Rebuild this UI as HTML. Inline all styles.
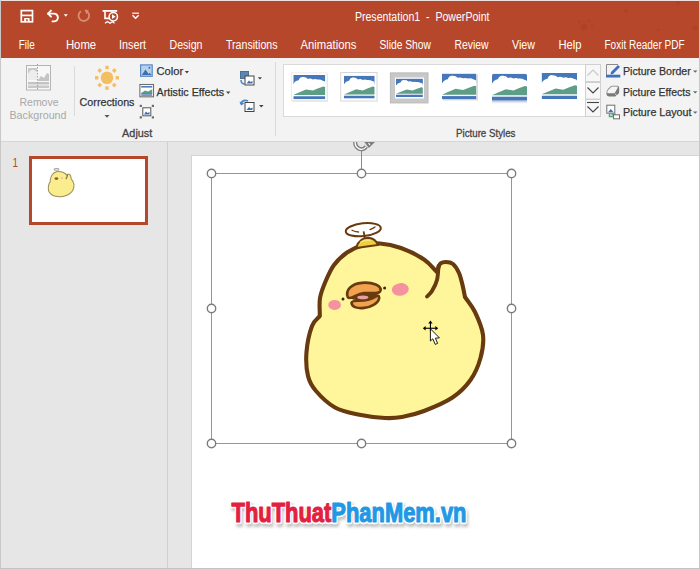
<!DOCTYPE html>
<html><head><meta charset="utf-8"><style>
*{margin:0;padding:0}
html,body{width:700px;height:569px;overflow:hidden;background:#E6E6E6}
svg{display:block;font-family:"Liberation Sans", sans-serif}
</style></head><body>
<svg width="700" height="569" viewBox="0 0 700 569"><defs><clipPath id="rclip"><path d="M492 100 V76.1 Q492 73.6 494.5 73.6 H524.5 Q527 73.6 527 76.1 V100 Z"/></clipPath><linearGradient id="refl" x1="0" y1="0" x2="0" y2="1"><stop offset="0" stop-color="#7C9CCC"/><stop offset="1" stop-color="#FFFFFF" stop-opacity="0"/></linearGradient><clipPath id="rotclip"><rect x="300" y="142" width="120" height="30"/></clipPath><filter id="blur" x="-10%" y="-30%" width="120%" height="160%"><feGaussianBlur stdDeviation="1.5"/></filter></defs>
<rect x="0" y="0" width="700" height="569" fill="#E6E6E6"/>
<rect x="1" y="1" width="698" height="57" fill="#B7472A"/>
<rect x="1" y="58" width="698" height="84" fill="#F3F3F3"/>
<rect x="1" y="141" width="698" height="1" fill="#D6D6D6"/>
<rect x="0" y="0" width="1" height="569" fill="#C8C8C8"/>
<rect x="699" y="0" width="1" height="569" fill="#D0D0D0"/>
<g fill="#9E3A22" opacity="0.35"><circle cx="626" cy="11" r="2"/><circle cx="584" cy="27" r="3.2"/><circle cx="579" cy="22" r="1.3"/><circle cx="589" cy="21" r="1.3"/><circle cx="592" cy="26" r="1.2"/><circle cx="658" cy="30" r="1.6"/><circle cx="678" cy="2.5" r="2.2"/><circle cx="695" cy="28" r="2.5"/><circle cx="515" cy="43" r="1.5"/></g>
<rect x="0" y="0" width="700" height="1" fill="#EFE2DE"/>
<text x="354.9" y="20.5" font-size="12.5" fill="#FFFFFF" font-weight="normal" textLength="134.6" lengthAdjust="spacingAndGlyphs" >Presentation1&#160;&#160;-&#160;&#160;PowerPoint</text>
<text x="18.8" y="49.0" font-size="12.5" fill="#FFFFFF" font-weight="normal" textLength="16.0" lengthAdjust="spacingAndGlyphs" >File</text>
<text x="65.9" y="49.0" font-size="12.5" fill="#FFFFFF" font-weight="normal" textLength="30.3" lengthAdjust="spacingAndGlyphs" >Home</text>
<text x="119.0" y="49.0" font-size="12.5" fill="#FFFFFF" font-weight="normal" textLength="27.0" lengthAdjust="spacingAndGlyphs" >Insert</text>
<text x="169.5" y="49.0" font-size="12.5" fill="#FFFFFF" font-weight="normal" textLength="33.0" lengthAdjust="spacingAndGlyphs" >Design</text>
<text x="226.0" y="49.0" font-size="12.5" fill="#FFFFFF" font-weight="normal" textLength="51.5" lengthAdjust="spacingAndGlyphs" >Transitions</text>
<text x="300.5" y="49.0" font-size="12.5" fill="#FFFFFF" font-weight="normal" textLength="56.0" lengthAdjust="spacingAndGlyphs" >Animations</text>
<text x="379.5" y="49.0" font-size="12.5" fill="#FFFFFF" font-weight="normal" textLength="51.5" lengthAdjust="spacingAndGlyphs" >Slide Show</text>
<text x="454.5" y="49.0" font-size="12.5" fill="#FFFFFF" font-weight="normal" textLength="34.0" lengthAdjust="spacingAndGlyphs" >Review</text>
<text x="512.0" y="49.0" font-size="12.5" fill="#FFFFFF" font-weight="normal" textLength="23.0" lengthAdjust="spacingAndGlyphs" >View</text>
<text x="558.5" y="49.0" font-size="12.5" fill="#FFFFFF" font-weight="normal" textLength="23.0" lengthAdjust="spacingAndGlyphs" >Help</text>
<text x="604.5" y="49.0" font-size="12.5" fill="#FFFFFF" font-weight="normal" textLength="80.0" lengthAdjust="spacingAndGlyphs" >Foxit Reader PDF</text>
<g fill="none" stroke="#FFFFFF" stroke-width="1.7"><rect x="21.3" y="10.6" width="11.2" height="11.2"/><path d="M21.3 15.4 H32.5"/></g><rect x="24.2" y="18" width="5.4" height="3.8" fill="#FFFFFF"/><rect x="26.2" y="19.2" width="1.5" height="2" fill="#B7472A"/>
<g fill="none" stroke="#FFFFFF" stroke-width="1.9" stroke-linecap="round" stroke-linejoin="round"><path d="M48 13.6 H54 A3.9 3.9 0 0 1 54 21.4 H52.5"/><path d="M51 10.6 L48 13.6 L51 16.6"/></g>
<path d="M63.8 14.2 H67.8 L65.8 16.7 Z" fill="#FFFFFF"/>
<g fill="none" stroke="#D98C76" stroke-width="1.8"><path d="M81 11.2 A5.3 5.3 0 1 0 87.2 11.6"/></g><path d="M84.5 9.6 L88.8 10.3 L86.4 14.2 Z" fill="#D98C76"/>
<rect x="102.6" y="10" width="14.6" height="1.8" fill="#FFFFFF"/><path d="M105 11.5 V18.4 H109" fill="none" stroke="#FFFFFF" stroke-width="1.6"/><circle cx="113.3" cy="16.7" r="4.2" fill="none" stroke="#FFFFFF" stroke-width="1.5"/><path d="M112 14.3 L115.6 16.7 L112 19.1 Z" fill="#FFFFFF"/><path d="M105 23.2 L107.5 21.5 L110 23.2 L112.5 21.8 L114.5 23.2" fill="none" stroke="#FFFFFF" stroke-width="1.3"/>
<path d="M132.2 13.2 H139" stroke="#FFFFFF" stroke-width="1.2"/><path d="M132.5 15.3 L135.6 18.3 L138.7 15.3" fill="none" stroke="#FFFFFF" stroke-width="1.5"/>
<g><rect x="26.5" y="65.5" width="24" height="24.5" fill="#F7F7F7" stroke="#B4B4B4" stroke-width="1"/><path d="M28 72 Q30 68 33 70 Q35 68 37 71 V80 H28 Z" fill="#EDEDED"/><path d="M28 68 H37 V72 Q33 68 30 71 L28 74 Z" fill="#C9C9C9"/><path d="M38 80 L41 76 L44 78 L47 73 L49 74 V81 H38 Z" fill="#C4C4C4"/><rect x="28" y="82" width="21" height="2.5" fill="#C4C4C4"/><rect x="28" y="85.5" width="21" height="2.5" fill="#C8C8C8"/><path d="M37.5 64 V91" stroke="#A0A0A0" stroke-width="1" stroke-dasharray="1.5 1.5"/></g>
<text x="19.5" y="105.5" font-size="11.3" fill="#A8A8A8" font-weight="normal" textLength="39.0" lengthAdjust="spacingAndGlyphs" >Remove</text>
<text x="9.5" y="119.4" font-size="11.3" fill="#A8A8A8" font-weight="normal" textLength="57.0" lengthAdjust="spacingAndGlyphs" >Background</text>
<rect x="74" y="66" width="1" height="50" fill="#DADADA"/>
<g fill="#F4BE62"><circle cx="107" cy="77.8" r="6.3"/><rect x="105.30" y="65.80" width="3.4" height="3.4" transform="rotate(0 107.00 67.50)"/><rect x="112.58" y="68.82" width="3.4" height="3.4" transform="rotate(45 114.28 70.52)"/><rect x="115.60" y="76.10" width="3.4" height="3.4" transform="rotate(90 117.30 77.80)"/><rect x="112.58" y="83.38" width="3.4" height="3.4" transform="rotate(135 114.28 85.08)"/><rect x="105.30" y="86.40" width="3.4" height="3.4" transform="rotate(180 107.00 88.10)"/><rect x="98.02" y="83.38" width="3.4" height="3.4" transform="rotate(225 99.72 85.08)"/><rect x="95.00" y="76.10" width="3.4" height="3.4" transform="rotate(270 96.70 77.80)"/><rect x="98.02" y="68.82" width="3.4" height="3.4" transform="rotate(315 99.72 70.52)"/></g>
<text x="79.6" y="105.5" font-size="11.4" fill="#333333" font-weight="normal" textLength="54.9" lengthAdjust="spacingAndGlyphs" stroke="#333333" stroke-width="0.25">Corrections</text>
<path d="M104.5 115 H109.5 L107 117.8 Z" fill="#555"/>
<text x="122.1" y="137.0" font-size="10.8" fill="#444444" font-weight="normal" textLength="30.2" lengthAdjust="spacingAndGlyphs" stroke="#444444" stroke-width="0.3">Adjust</text>
<rect x="140.6" y="64.9" width="11.6" height="11.4" fill="#B4D2F0" stroke="#5A89C2" stroke-width="1.2"/><path d="M141.8 75 L145.5 69.6 L148.6 74 L149.8 72.8 L151.4 75 Z" fill="#3F6EA8"/><circle cx="149.4" cy="67.8" r="1" fill="#3F6EA8"/>
<text x="156.5" y="75.0" font-size="11.3" fill="#333333" font-weight="normal" textLength="26.6" lengthAdjust="spacingAndGlyphs" stroke="#333333" stroke-width="0.25">Color</text>
<path d="M184.8 71 H189 L186.9 73.4 Z" fill="#444"/>
<rect x="139.9" y="84.5" width="13.6" height="12.3" fill="#FFFFFF" stroke="#6E6E6E" stroke-width="1.1"/><path d="M141.2 86 H152.2 V87.6 H141.2 Z" fill="#4F7FC0"/><path d="M141.2 93 L145 90.5 L148 91.5 L152.2 89.2 V93 Z" fill="#5E9E86"/><path d="M141.2 93.6 H152.2" stroke="#2E5E3E" stroke-width="0.8"/><path d="M141.2 94.3 H152.2 V95.8 H141.2 Z" fill="#4F7FC0"/>
<text x="156.5" y="95.7" font-size="11.3" fill="#333333" font-weight="normal" textLength="67.7" lengthAdjust="spacingAndGlyphs" stroke="#333333" stroke-width="0.25">Artistic Effects</text>
<path d="M226 91.5 H230.4 L228.2 94 Z" fill="#444"/>
<g fill="#6A6A6A"><rect x="139.7" y="104.8" width="2.2" height="2.2"/><rect x="151.8" y="104.8" width="2.2" height="2.2"/><rect x="139.7" y="116.3" width="2.2" height="2.2"/><rect x="151.8" y="116.3" width="2.2" height="2.2"/></g><rect x="142.8" y="107.8" width="8" height="8" fill="#FFFFFF" stroke="#555" stroke-width="1"/><path d="M144 114.5 L146 111.5 L147.5 113 L149.5 112 V114.5 Z" fill="#3D6FAE"/>
<rect x="240.5" y="71.5" width="8" height="7" fill="#5A86B8" stroke="#4F6F8F" stroke-width="1"/><rect x="245" y="76" width="9" height="9" fill="#FFFFFF" stroke="#444" stroke-width="1"/><path d="M246.5 83.5 L249 80.5 L250.5 82 L252.5 81 V83.5 Z" fill="#3D6FAE"/><path d="M241 80 Q241 84 245 84" fill="none" stroke="#4A86C6" stroke-width="1.5"/>
<path d="M257.8 77.3 H262 L259.9 79.6 Z" fill="#444"/>
<rect x="245" y="102.5" width="9" height="9" fill="#FFFFFF" stroke="#444" stroke-width="1"/><path d="M246.5 110 L249 107 L250.5 108.5 L252.5 107.5 V110 Z" fill="#3D6FAE"/><path d="M240.5 104 Q243 99 248 101" fill="none" stroke="#4A86C6" stroke-width="1.8"/><path d="M239.5 101.5 L241 105.5 L244.5 103.5 Z" fill="#4A86C6"/>
<path d="M259 105 H263.6 L261.3 107.4 Z" fill="#444"/>
<rect x="275" y="62" width="1" height="74" fill="#DADADA"/>
<rect x="283.5" y="64.5" width="317" height="52" fill="#FFFFFF" stroke="#DADADA" stroke-width="1"/>
<rect x="292" y="74" width="36" height="28" fill="#D8D8D8" opacity="0.6"/>
<rect x="291.4" y="72.9" width="35.6" height="27.8" fill="#FFFFFF" stroke="#E0E0E0" stroke-width="0.6"/>
<svg x="293.3" y="75" width="32" height="24.3" viewBox="0 0 32 24" preserveAspectRatio="none"><rect x="0" y="0" width="32" height="24" fill="#FFFFFF"/><rect x="0" y="0" width="32" height="9" fill="#4677B8"/><path d="M0 9.4 Q1.5 5.8 5.3 5.2 Q6.8 1.6 9.6 2 Q12.8 1.8 14.6 3.9 Q17.2 3 19.6 4.4 Q22 3.6 24 4.5 Q27.2 4 29.5 5.6 Q31.5 5.8 32 7 V16 H0 Z" fill="#FFFFFF"/><path d="M0 19.7 L5 17.5 L12.7 14.2 L19.6 15.4 L25 13.2 L30.1 11.3 L32 11.8 V19.7 Z" fill="#5E9E86"/><rect x="0" y="21" width="32" height="3" fill="#4677B8"/></svg>
<rect x="340.7" y="72.5" width="36.3" height="28.5" fill="#FFFFFF" stroke="#D6D6D6" stroke-width="1"/>
<svg x="343.9" y="75.7" width="30.8" height="22.9" viewBox="0 0 32 24" preserveAspectRatio="none"><rect x="0" y="0" width="32" height="24" fill="#FFFFFF"/><rect x="0" y="0" width="32" height="9" fill="#4677B8"/><path d="M0 9.4 Q1.5 5.8 5.3 5.2 Q6.8 1.6 9.6 2 Q12.8 1.8 14.6 3.9 Q17.2 3 19.6 4.4 Q22 3.6 24 4.5 Q27.2 4 29.5 5.6 Q31.5 5.8 32 7 V16 H0 Z" fill="#FFFFFF"/><path d="M0 19.7 L5 17.5 L12.7 14.2 L19.6 15.4 L25 13.2 L30.1 11.3 L32 11.8 V19.7 Z" fill="#5E9E86"/><rect x="0" y="21" width="32" height="3" fill="#4677B8"/></svg>
<rect x="390.4" y="72.9" width="37.6" height="30" fill="#C8C8C8" stroke="#B8B8B8" stroke-width="1"/>
<rect x="395" y="77.5" width="29" height="21" fill="#FFFFFF"/>
<svg x="396" y="78.6" width="26.9" height="18.4" viewBox="0 0 32 24" preserveAspectRatio="none"><rect x="0" y="0" width="32" height="24" fill="#FFFFFF"/><rect x="0" y="0" width="32" height="9" fill="#4677B8"/><path d="M0 9.4 Q1.5 5.8 5.3 5.2 Q6.8 1.6 9.6 2 Q12.8 1.8 14.6 3.9 Q17.2 3 19.6 4.4 Q22 3.6 24 4.5 Q27.2 4 29.5 5.6 Q31.5 5.8 32 7 V16 H0 Z" fill="#FFFFFF"/><path d="M0 19.7 L5 17.5 L12.7 14.2 L19.6 15.4 L25 13.2 L30.1 11.3 L32 11.8 V19.7 Z" fill="#5E9E86"/><rect x="0" y="21" width="32" height="3" fill="#4677B8"/></svg>
<rect x="443" y="74.5" width="35" height="26" fill="#CFCFCF" opacity="0.7"/>
<svg x="442" y="73.6" width="34.4" height="25.7" viewBox="0 0 32 24" preserveAspectRatio="none"><rect x="0" y="0" width="32" height="24" fill="#FFFFFF"/><rect x="0" y="0" width="32" height="9" fill="#4677B8"/><path d="M0 9.4 Q1.5 5.8 5.3 5.2 Q6.8 1.6 9.6 2 Q12.8 1.8 14.6 3.9 Q17.2 3 19.6 4.4 Q22 3.6 24 4.5 Q27.2 4 29.5 5.6 Q31.5 5.8 32 7 V16 H0 Z" fill="#FFFFFF"/><path d="M0 19.7 L5 17.5 L12.7 14.2 L19.6 15.4 L25 13.2 L30.1 11.3 L32 11.8 V19.7 Z" fill="#5E9E86"/><rect x="0" y="21" width="32" height="3" fill="#4677B8"/></svg>
<g clip-path="url(#rclip)"><svg x="492" y="73.6" width="35" height="26.4" viewBox="0 0 32 24" preserveAspectRatio="none"><rect x="0" y="0" width="32" height="24" fill="#FFFFFF"/><rect x="0" y="0" width="32" height="9" fill="#4677B8"/><path d="M0 9.4 Q1.5 5.8 5.3 5.2 Q6.8 1.6 9.6 2 Q12.8 1.8 14.6 3.9 Q17.2 3 19.6 4.4 Q22 3.6 24 4.5 Q27.2 4 29.5 5.6 Q31.5 5.8 32 7 V16 H0 Z" fill="#FFFFFF"/><path d="M0 19.7 L5 17.5 L12.7 14.2 L19.6 15.4 L25 13.2 L30.1 11.3 L32 11.8 V19.7 Z" fill="#5E9E86"/><rect x="0" y="21" width="32" height="3" fill="#4677B8"/></svg></g>
<rect x="492" y="100" width="35" height="4.5" fill="url(#refl)"/>
<svg x="541.6" y="73" width="35.4" height="26" viewBox="0 0 32 24" preserveAspectRatio="none"><rect x="0" y="0" width="32" height="24" fill="#FFFFFF"/><rect x="0" y="0" width="32" height="9" fill="#4677B8"/><path d="M0 9.4 Q1.5 5.8 5.3 5.2 Q6.8 1.6 9.6 2 Q12.8 1.8 14.6 3.9 Q17.2 3 19.6 4.4 Q22 3.6 24 4.5 Q27.2 4 29.5 5.6 Q31.5 5.8 32 7 V16 H0 Z" fill="#FFFFFF"/><path d="M0 19.7 L5 17.5 L12.7 14.2 L19.6 15.4 L25 13.2 L30.1 11.3 L32 11.8 V19.7 Z" fill="#5E9E86"/><rect x="0" y="21" width="32" height="3" fill="#4677B8"/></svg>
<rect x="585.5" y="64.5" width="15" height="17" fill="#F7F7F7" stroke="#D0D0D0" stroke-width="1"/>
<path d="M587.5 75.5 L593 70 L598.5 75.5" fill="none" stroke="#C8C8C8" stroke-width="1.1"/>
<rect x="585.5" y="82.5" width="15" height="16.5" fill="#F7F7F7" stroke="#D0D0D0" stroke-width="1"/>
<path d="M587.5 87.5 L593 93 L598.5 87.5" fill="none" stroke="#444" stroke-width="1.1"/>
<rect x="585.5" y="99.5" width="15" height="17" fill="#F7F7F7" stroke="#D0D0D0" stroke-width="1"/>
<path d="M587 102.5 H599" stroke="#444" stroke-width="1.1"/><path d="M587.5 106.5 L593 112 L598.5 106.5" fill="none" stroke="#444" stroke-width="1.1"/>
<text x="456.0" y="137.0" font-size="10.8" fill="#444444" font-weight="normal" textLength="59.5" lengthAdjust="spacingAndGlyphs" stroke="#444444" stroke-width="0.3">Picture Styles</text>
<path d="M606.5 75 V64.5 H618" fill="none" stroke="#8A8A8A" stroke-width="1"/><rect x="606" y="74.7" width="14.3" height="2.8" fill="#3F6FBF"/><path d="M611 72 L618 65 L620 67 L613 74 L610.5 74.5 Z" fill="#3F6FBF"/>
<text x="623.0" y="74.8" font-size="11.2" fill="#333333" font-weight="normal" textLength="67.8" lengthAdjust="spacingAndGlyphs" stroke="#333333" stroke-width="0.25">Picture Border</text>
<path d="M693 70.4 H697.4 L695.2 72.8 Z" fill="#6A6A6A"/>
<path d="M606.5 92.5 Q606.5 90.5 608 89 L610.5 86.5 Q611.2 85.8 612.5 85.8 H617 Q619.2 85.8 619.2 88 V91.8 Q619.2 93 618.2 94 L616.2 96 Q615.6 96.4 614.8 96.4 H609 Q606.5 96.4 606.5 94 Z" fill="#7A7A7A"/><path d="M607.2 92.2 Q607.2 91 608.2 90 L610.8 87.2 Q611.4 86.6 612.4 86.6 H616.8 Q618.4 86.6 617.6 88 L615.2 92.2 Q614.6 93.2 613.4 93.2 H608.2 Q607.2 93.2 607.2 92.2 Z" fill="#F4F4F4"/><path d="M615 93.5 L617 96" stroke="#E8E8E8" stroke-width="0.9"/>
<text x="623.0" y="95.7" font-size="11.2" fill="#333333" font-weight="normal" textLength="67.5" lengthAdjust="spacingAndGlyphs" stroke="#333333" stroke-width="0.25">Picture Effects</text>
<path d="M693 91.2 H697.4 L695.2 93.6 Z" fill="#6A6A6A"/>
<rect x="606.8" y="105.2" width="8" height="8" fill="#FFFFFF" stroke="#6E6E6E" stroke-width="1"/><path d="M608 112.2 L610.8 109 L613.6 112.2 Z" fill="#3F6FBF"/><path d="M609.5 113.5 V116.5 H613 M611.5 114.5 H616" fill="none" stroke="#5AA27C" stroke-width="1.5"/><rect x="613.5" y="114.8" width="6" height="4" fill="#FFFFFF" stroke="#6E6E6E" stroke-width="1"/>
<text x="623.0" y="115.7" font-size="11.2" fill="#333333" font-weight="normal" textLength="68.5" lengthAdjust="spacingAndGlyphs" stroke="#333333" stroke-width="0.25">Picture Layout</text>
<path d="M693 111.4 H697.4 L695.2 113.8 Z" fill="#6A6A6A"/>
<rect x="167" y="142" width="1" height="427" fill="#CFCFCF"/>
<rect x="191" y="155" width="508" height="414" fill="#D4D4D4"/>
<rect x="192" y="156" width="507" height="413" fill="#FFFFFF"/>
<rect x="30.5" y="157.5" width="116" height="66" fill="#FFFFFF" stroke="#B7472A" stroke-width="3"/>
<text x="12.5" y="167.0" font-size="13" fill="#B7472A" font-weight="normal" textLength="5.5" lengthAdjust="spacingAndGlyphs" >1</text>
<rect x="211.5" y="173.5" width="300.0" height="270.0" fill="none" stroke="#969696" stroke-width="1"/>
<path d="M437.00 272.00 C432.67 267.83 430.00 263.50 424.00 259.50 C418.00 255.50 408.33 250.67 401.00 248.00 C393.67 245.33 386.50 243.92 380.00 243.50 C373.50 243.08 367.50 244.00 362.00 245.50 C356.50 247.00 351.67 249.25 347.00 252.50 C342.33 255.75 337.58 260.17 334.00 265.00 C330.42 269.83 327.83 276.00 325.50 281.50 C323.17 287.00 320.95 292.25 320.00 298.00 C319.05 303.75 319.87 310.00 319.80 316.00 C317.20 319.33 314.22 320.00 312.00 326.00 C309.78 332.00 307.17 343.67 306.50 352.00 C305.83 360.33 306.42 369.50 308.00 376.00 C309.58 382.50 311.50 385.75 316.00 391.00 C320.50 396.25 328.00 403.58 335.00 407.50 C342.00 411.42 349.67 412.75 358.00 414.50 C366.33 416.25 377.67 417.58 385.00 418.00 C392.33 418.42 395.50 418.17 402.00 417.00 C408.50 415.83 415.58 414.25 424.00 411.00 C432.42 407.75 444.75 402.67 452.50 397.50 C460.25 392.33 465.83 386.58 470.50 380.00 C475.17 373.42 478.42 365.50 480.50 358.00 C482.58 350.50 483.92 342.67 483.00 335.00 C482.08 327.33 478.00 318.33 475.00 312.00 C472.00 305.67 468.33 302.00 465.00 297.00 C464.17 293.00 463.50 289.00 462.50 285.00 C461.50 281.00 460.58 276.50 459.00 273.00 C457.42 269.50 455.17 265.83 453.00 264.00 C450.83 262.17 448.17 262.00 446.00 262.00 C443.83 262.00 441.50 262.33 440.00 264.00 C438.50 265.67 438.00 269.33 437.00 272.00 Z" fill="#FFF69B" stroke="#683A0F" stroke-width="4.1" stroke-linejoin="round"/>
<path d="M438.50 266.00 C438.25 268.33 438.08 275.83 437.00 280.00 C435.92 284.17 433.67 288.25 432.00 291.00 C430.33 293.75 427.83 295.58 427.00 296.50" fill="none" stroke="#683A0F" stroke-width="3.9" stroke-linecap="round"/>
<path d="M356 248 Q359 237.8 368.5 237.8 Q375.5 238.5 378 245 Z" fill="#EFCF3C" stroke="#683A0F" stroke-width="2"/>
<path d="M360 242.5 Q364 239.8 371 240.5" fill="none" stroke="#F8E680" stroke-width="1.2"/>
<ellipse cx="363.3" cy="229.7" rx="17.6" ry="6.4" fill="#FFFFFF" stroke="#683A0F" stroke-width="2" transform="rotate(-6 363.3 229.7)"/>
<path d="M363.6 231.3 L364.8 238" stroke="#683A0F" stroke-width="1.8"/>
<path d="M352 230.2 Q355 231.8 358.5 232 M370 229.6 Q373 228.5 375 227" fill="none" stroke="#683A0F" stroke-width="1.3" stroke-linecap="round"/>
<ellipse cx="334.6" cy="304.9" rx="6.3" ry="5" fill="#F5929F"/>
<ellipse cx="400.3" cy="289.4" rx="8.5" ry="6.3" fill="#F5929F" transform="rotate(-8 400.3 289.4)"/>
<circle cx="343" cy="299" r="1.5" fill="#3A2A10"/><circle cx="384.6" cy="288" r="1.5" fill="#3A2A10"/>
<path d="M350 298.5 Q362 292 377 294 Q376 298.5 366 299.8 Q355 301 350 298.5 Z" fill="#683A0F"/>
<path d="M351.5 302.8 C352 307.5 358 308.6 364 307.9 C371 307.2 378.8 303 379.2 297.8 C379 295.5 377.5 295 376 296.5 C372 299.5 365 300.6 358 300.8 C354.5 300.9 351.5 301.5 351.5 302.8 Z" fill="#F0A24E" stroke="#683A0F" stroke-width="2.6" stroke-linejoin="round"/>
<path d="M348 297.5 C344.5 290 352 283.5 362 282.8 C373 282 381.5 285.5 380.5 290.5 C379.5 294.5 372 292.5 364 293.2 C356 294 351.5 300 348 297.5 Z" fill="#F0A24E" stroke="#683A0F" stroke-width="2.7" stroke-linejoin="round"/>
<ellipse cx="362.8" cy="297.4" rx="5.6" ry="1.9" fill="#E8A0A8"/>
<circle cx="211.5" cy="173.5" r="4.2" fill="#FFFFFF" stroke="#7C7C7C" stroke-width="1.4"/>
<circle cx="361.5" cy="173.5" r="4.2" fill="#FFFFFF" stroke="#7C7C7C" stroke-width="1.4"/>
<circle cx="511.5" cy="173.5" r="4.2" fill="#FFFFFF" stroke="#7C7C7C" stroke-width="1.4"/>
<circle cx="211.5" cy="308.5" r="4.2" fill="#FFFFFF" stroke="#7C7C7C" stroke-width="1.4"/>
<circle cx="511.5" cy="308.5" r="4.2" fill="#FFFFFF" stroke="#7C7C7C" stroke-width="1.4"/>
<circle cx="211.5" cy="443.5" r="4.2" fill="#FFFFFF" stroke="#7C7C7C" stroke-width="1.4"/>
<circle cx="361.5" cy="443.5" r="4.2" fill="#FFFFFF" stroke="#7C7C7C" stroke-width="1.4"/>
<circle cx="511.5" cy="443.5" r="4.2" fill="#FFFFFF" stroke="#7C7C7C" stroke-width="1.4"/>
<line x1="361.5" y1="149" x2="361.5" y2="169" stroke="#8A8A8A" stroke-width="1"/>
<g clip-path="url(#rotclip)"><g transform="translate(0 1)">
<path d="M355.3 140 A6.2 7 0 0 0 366.3 145.5" fill="none" stroke="#7E7E7E" stroke-width="4"/>
<path d="M355.3 140 A6.2 7 0 0 0 366.3 145.5" fill="none" stroke="#FFFFFF" stroke-width="1.3"/>
<path d="M364 140.5 L375.5 140.5 L368.8 147 Z" fill="#7E7E7E"/><path d="M368.5 142 L370 143.8" stroke="#FFF" stroke-width="1.1"/>
</g></g>
<g fill="#000"><rect x="429.9" y="322.5" width="1.1" height="9"/><rect x="424.5" y="327.7" width="12" height="1.1"/><path d="M430.45 320.6 L428.3 323.4 H432.6 Z"/><path d="M422.8 328.25 L425.6 326.1 V330.4 Z"/><path d="M438.2 328.25 L435.4 326.1 V330.4 Z"/></g>
<path d="M430.4 328.8 V341 L432.8 338.8 L435.2 344.4 L437.6 343.4 L435.4 338.2 L439.4 337.8 Z" fill="#FFFFFF" stroke="#000" stroke-width="0.9" stroke-linejoin="round"/>
<g transform="translate(61.2 182.5) scale(0.145) translate(-395 -320)"><path d="M437.00 272.00 C432.67 267.83 430.00 263.50 424.00 259.50 C418.00 255.50 408.33 250.67 401.00 248.00 C393.67 245.33 386.50 243.92 380.00 243.50 C373.50 243.08 367.50 244.00 362.00 245.50 C356.50 247.00 351.67 249.25 347.00 252.50 C342.33 255.75 337.58 260.17 334.00 265.00 C330.42 269.83 327.83 276.00 325.50 281.50 C323.17 287.00 320.95 292.25 320.00 298.00 C319.05 303.75 319.87 310.00 319.80 316.00 C317.20 319.33 314.22 320.00 312.00 326.00 C309.78 332.00 307.17 343.67 306.50 352.00 C305.83 360.33 306.42 369.50 308.00 376.00 C309.58 382.50 311.50 385.75 316.00 391.00 C320.50 396.25 328.00 403.58 335.00 407.50 C342.00 411.42 349.67 412.75 358.00 414.50 C366.33 416.25 377.67 417.58 385.00 418.00 C392.33 418.42 395.50 418.17 402.00 417.00 C408.50 415.83 415.58 414.25 424.00 411.00 C432.42 407.75 444.75 402.67 452.50 397.50 C460.25 392.33 465.83 386.58 470.50 380.00 C475.17 373.42 478.42 365.50 480.50 358.00 C482.58 350.50 483.92 342.67 483.00 335.00 C482.08 327.33 478.00 318.33 475.00 312.00 C472.00 305.67 468.33 302.00 465.00 297.00 C464.17 293.00 463.50 289.00 462.50 285.00 C461.50 281.00 460.58 276.50 459.00 273.00 C457.42 269.50 455.17 265.83 453.00 264.00 C450.83 262.17 448.17 262.00 446.00 262.00 C443.83 262.00 441.50 262.33 440.00 264.00 C438.50 265.67 438.00 269.33 437.00 272.00 Z" fill="#FAED8E" stroke="#9A8E5C" stroke-width="7"/><path d="M438.5 266 Q437 282 427 296.5" fill="none" stroke="#7A7040" stroke-width="8"/><ellipse cx="362" cy="293" rx="13" ry="10" fill="#8E5E24"/><ellipse cx="400" cy="289" rx="9" ry="7" fill="#F2C0A8"/><ellipse cx="363" cy="229.5" rx="17" ry="6.3" fill="none" stroke="#A8A8A0" stroke-width="7"/></g>
<g font-weight="bold"><text x="231.5" y="522.4" font-size="27.5" textLength="235" lengthAdjust="spacingAndGlyphs" transform="translate(1.5 2.5)" fill="#9A9A9A" stroke="#9A9A9A" stroke-width="4" opacity="0.6" filter="url(#blur)">ThuThuatPhanMem.vn</text><text x="231.5" y="522.4" font-size="27.5" textLength="235" lengthAdjust="spacingAndGlyphs" fill="#FFFFFF" stroke="#FFFFFF" stroke-width="4.5" stroke-linejoin="round">ThuThuatPhanMem.vn</text><text x="231.5" y="522.4" font-size="27.5" textLength="235" lengthAdjust="spacingAndGlyphs" stroke-width="1.1" stroke-linejoin="round"><tspan fill="#E3203E" stroke="#E3203E">ThuThuat</tspan><tspan fill="#2298E4" stroke="#2298E4">PhanMem.vn</tspan></text></g>
<rect x="0" y="0" width="1" height="569" fill="#C8C8C8"/><rect x="699" y="0" width="1" height="569" fill="#C8C8C8"/><rect x="0" y="568" width="700" height="1" fill="#C4C4C4"/>
</svg>
</body></html>
